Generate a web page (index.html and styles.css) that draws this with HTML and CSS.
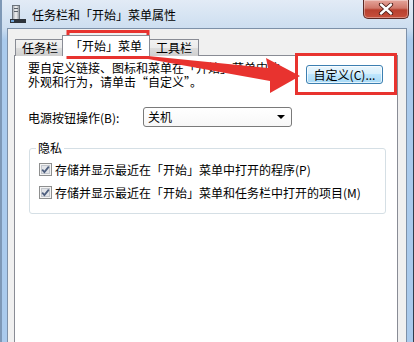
FILE: index.html
```html
<!DOCTYPE html>
<html lang="zh-CN">
<head>
<meta charset="utf-8">
<title>任务栏和「开始」菜单属性</title>
<link rel="stylesheet" href="styles.css">
</head>
<body>
<div class="window">
  <div class="titlebar">
    <svg class="app-icon" width="16" height="18" viewBox="0 0 16 18">
      <defs>
        <linearGradient id="tw" x1="0" x2="1" y1="0" y2="0">
          <stop offset="0" stop-color="#9aa0a8"/>
          <stop offset="0.5" stop-color="#f4f4f4"/>
          <stop offset="1" stop-color="#8a9098"/>
        </linearGradient>
      </defs>
      <rect x="2.5" y="0.5" width="7" height="14" fill="url(#tw)" stroke="#6c737c"/>
      <rect x="4" y="3" width="4" height="1" fill="#5a6169"/>
      <rect x="4" y="6" width="4" height="1" fill="#5a6169"/>
      <rect x="0" y="14" width="16" height="4" fill="#2d333b"/>
      <rect x="1" y="15" width="3" height="2" fill="#6fa2d6"/>
    </svg>
    <span class="title">任务栏和「开始」菜单属性</span>
    <div class="close">
      <svg width="16" height="12" viewBox="0 0 16 12">
        <path d="M3 1.5 L13 10.5 M13 1.5 L3 10.5" stroke="#4a1a14" stroke-width="4.2" stroke-linecap="round"/>
        <path d="M3 1.5 L13 10.5 M13 1.5 L3 10.5" stroke="#ffffff" stroke-width="2.4" stroke-linecap="round"/>
      </svg>
    </div>
  </div>
  <div class="client">
    <div class="tabs">
      <div class="tab">任务栏</div>
      <div class="tab active">「开始」菜单</div>
      <div class="tab">工具栏</div>
    </div>
    <div class="panel">
      <div class="intro-row">
        <p class="intro">要自定义链接、图标和菜单在「开始」菜单中的<br>外观和行为，请单击“自定义”。</p>
        <div class="btn">自定义(C)...</div>
      </div>
      <div class="power-row">
        <span class="label">电源按钮操作(B):</span>
        <div class="select"><span>关机</span><span class="caret"></span></div>
      </div>
      <div class="group">
        <span class="legend">隐私</span>
        <div class="check-row">
          <svg class="checkbox" width="13" height="13" viewBox="0 0 13 13">
            <rect x="0.5" y="0.5" width="12" height="12" fill="#f4f4f4" stroke="#8e8f8f"/>
            <rect x="2.5" y="2.5" width="8" height="8" fill="#e2e4e8" stroke="#c2c6cc"/>
            <path d="M3.2 6.6 L5.4 9 L9.8 3.6" fill="none" stroke="#4e5f7e" stroke-width="1.8"/>
          </svg>
          <span>存储并显示最近在「开始」菜单中打开的程序(P)</span>
        </div>
        <div class="check-row">
          <svg class="checkbox" width="13" height="13" viewBox="0 0 13 13">
            <rect x="0.5" y="0.5" width="12" height="12" fill="#f4f4f4" stroke="#8e8f8f"/>
            <rect x="2.5" y="2.5" width="8" height="8" fill="#e2e4e8" stroke="#c2c6cc"/>
            <path d="M3.2 6.6 L5.4 9 L9.8 3.6" fill="none" stroke="#4e5f7e" stroke-width="1.8"/>
          </svg>
          <span>存储并显示最近在「开始」菜单和任务栏中打开的项目(M)</span>
        </div>
      </div>
    </div>
  </div>
  <svg class="annot" width="414" height="342" viewBox="0 0 414 342">
    <rect x="66" y="31.5" width="80" height="26" fill="none" stroke="#e8332f" stroke-width="3"/>
    <rect x="294.5" y="54.5" width="99" height="39" fill="none" stroke="#e8332f" stroke-width="3"/>
    <path d="M146 56 L266 68 L264 58 L298 76 L268 93 L268 81 L146 59 Z" fill="#e8332f"/>
  </svg>
</div>
</body>
</html>
```

FILE: styles.css
```css
* { box-sizing: border-box; }
html, body { margin: 0; padding: 0; }
body {
  width: 414px;
  height: 342px;
  overflow: hidden;
  font-family: "Noto Sans CJK SC", "Liberation Sans", sans-serif;
  font-size: 12px;
  color: #000;
}
.window {
  position: relative;
  width: 414px;
  height: 342px;
  display: flex;
  flex-direction: column;
  background: linear-gradient(to bottom, #e2ebf6 0px, #cddef0 28px, #aacaec 40px, #aacaec 100%);
  border-left: 2px solid #7e98b6;
  border-right: 1px solid #2f3c4c;
  padding: 0 6px 0 5px;
}
.titlebar {
  height: 28px;
  flex: none;
  display: flex;
  align-items: center;
  padding-left: 3px;
  position: relative;
}
.app-icon { margin-right: 6px; }
.title { font-size: 12px; line-height: 14px; margin-top: 2px; color: #000; }
.close {
  position: absolute;
  right: -2px;
  top: 0;
  width: 46px;
  height: 19px;
  border: 1px solid #5a2a26;
  border-top: none;
  border-radius: 0 0 5px 5px;
  background: linear-gradient(to bottom, #e5a59b 0%, #d0786a 45%, #b8402f 55%, #c7503c 100%);
  display: flex;
  align-items: center;
  justify-content: center;
  box-shadow: inset 0 0 0 1px rgba(255,255,255,0.35);
}
.client {
  flex: 1;
  background: #f0f0f0;
  border: 1px solid #7d90a8;
  border-bottom: none;
  padding: 0 8px 0 6px;
  display: flex;
  flex-direction: column;
}
.tabs {
  display: flex;
  align-items: flex-end;
  height: 27px;
  padding-left: 1px;
  margin-bottom: -1px;
  position: relative;
  z-index: 1;
}
.tab {
  height: 17px;
  padding: 0 6px;
  border: 1px solid #898c95;
  border-bottom: none;
  margin-right: -1px;
  background: linear-gradient(to bottom, #f2f2f2 0%, #ebebeb 50%, #dddddd 51%, #cfcfcf 100%);
  line-height: 16px;
  font-size: 12px;
}
.tab.active {
  height: 21px;
  background: #fff;
  padding: 0 7px;
  margin: 0 -1px 0 -2px;
  line-height: 19px;
  position: relative;
  z-index: 2;
}
.panel {
  flex: 1;
  background: #fff;
  border: 1px solid #898c95;
  border-bottom: none;
  padding: 5px 0 0 13px;
}
.intro-row {
  display: flex;
  align-items: flex-start;
}
.intro {
  margin: 0;
  width: 278px;
  line-height: 14px;
  font-size: 12px;
}
.btn {
  margin-top: 4px;
  width: 77px;
  height: 19px;
  border: 1px solid #3c7fb1;
  border-radius: 3px;
  background: linear-gradient(to bottom, #eaf6fd 0%, #d9f0fc 45%, #bee6fd 50%, #a7d9f5 100%);
  box-shadow: inset 0 0 0 1px rgba(255,255,255,0.7);
  font-size: 12px;
  line-height: 17px;
  text-align: center;
}
.power-row {
  display: flex;
  align-items: center;
  margin-top: 18px;
  height: 20px;
}
.label { width: 115px; }
.select {
  width: 149px;
  height: 20px;
  border: 1px solid #7a7a7a;
  border-radius: 3px;
  background: linear-gradient(to bottom, #ffffff 0%, #f7f7f7 100%);
  display: flex;
  align-items: center;
  justify-content: space-between;
  padding: 0 6px 0 4px;
  line-height: 18px;
}
.caret {
  width: 0;
  height: 0;
  border-left: 4px solid transparent;
  border-right: 4px solid transparent;
  border-top: 4px solid #000;
}
.group {
  position: relative;
  margin-top: 21px;
  margin-left: 1px;
  width: 357px;
  height: 66px;
  border: 1px solid #d5dfe5;
  border-radius: 3px;
  padding: 9px 0 0 9px;
}
.legend {
  position: absolute;
  top: -8px;
  left: 6px;
  background: #fff;
  padding: 0 2px;
  line-height: 14px;
}
.check-row {
  display: flex;
  align-items: center;
  height: 23px;
}
.checkbox { margin-right: 3px; flex: none; }
.annot {
  position: absolute;
  left: 0;
  top: 0;
  pointer-events: none;
}
```
